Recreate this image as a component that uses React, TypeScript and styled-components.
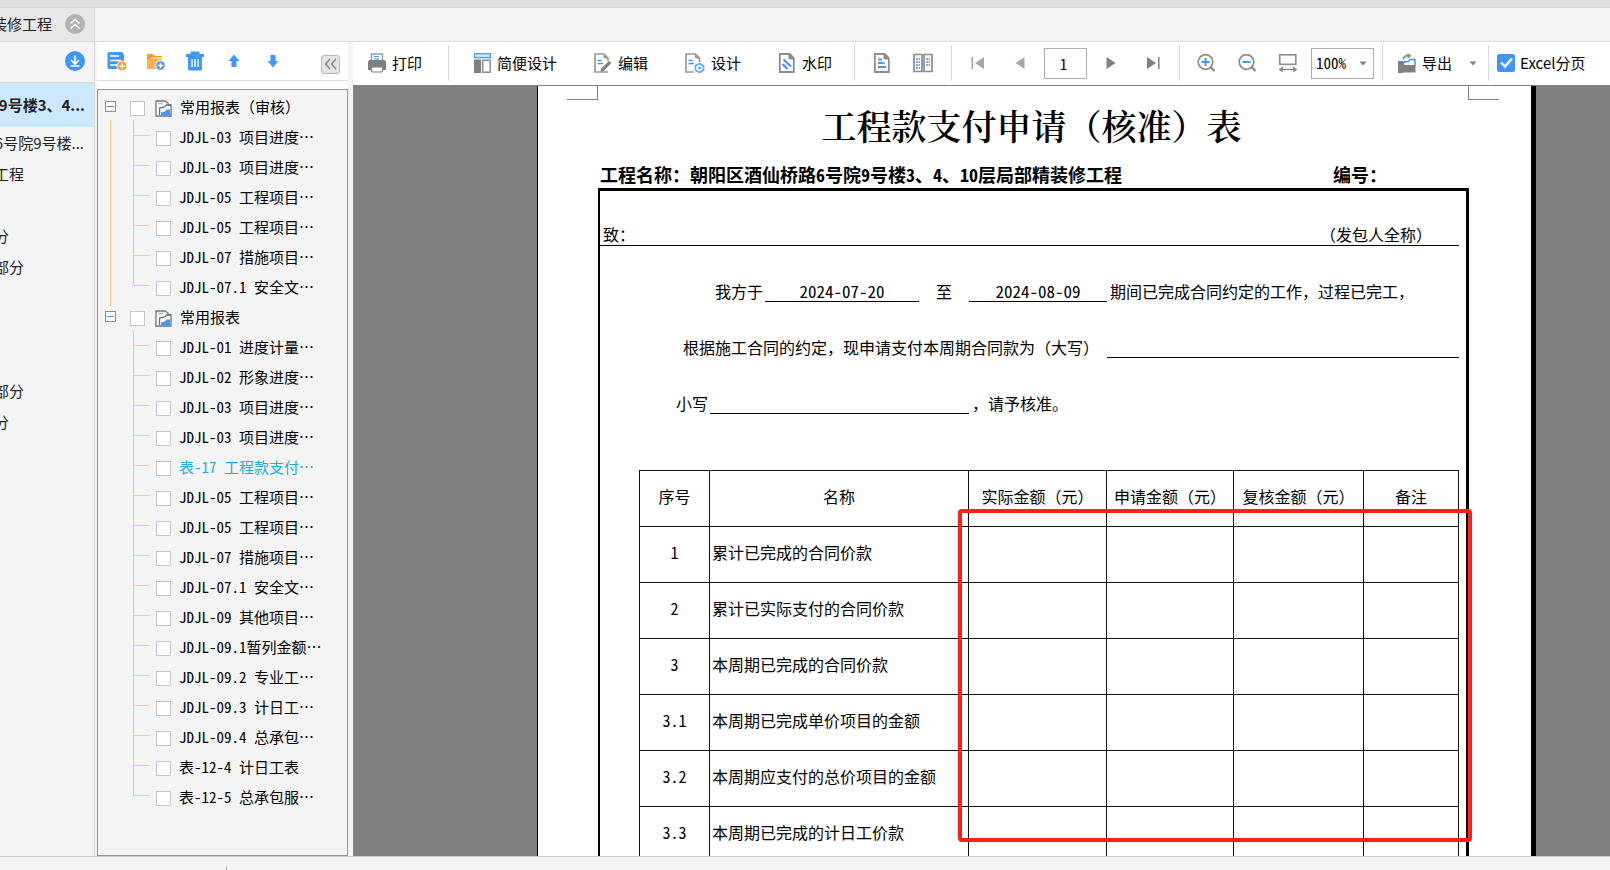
import React from 'react';
import styled, { createGlobalStyle, css } from 'styled-components';

const mono = '"Noto Sans Mono CJK SC", "Noto Sans CJK SC", "Liberation Mono", monospace';
const sans = '"Noto Sans CJK SC", "Noto Sans", sans-serif';

const GlobalStyle = createGlobalStyle`
  *, *::before, *::after { box-sizing: border-box; }
  body { margin: 0; background: #f4f4f4; color: #000; font: 15px/20px ${mono}; }
  button, input, select { font: inherit; color: inherit; margin: 0; }
  ul { list-style: none; margin: 0; padding: 0; }
  svg { display: block; flex: none; }
`;

const Shell = styled.div`
  display: flex;
  flex-direction: column;
  height: 100vh;
  overflow: hidden;
`;

const TitleStrip = styled.div`
  flex: none;
  height: 8px;
  background: #e1e1e1;
  border-bottom: 1px solid #d4d4d4;
`;

const TabStrip = styled.div`
  display: flex;
  flex: none;
  height: 34px;
  background: #f4f4f4;
  border-bottom: 1px solid #dcdcdc;
`;

const ProjectTab = styled.div`
  display: flex;
  align-items: center;
  justify-content: flex-end;
  gap: 13px;
  width: 95px;
  padding: 0 9px 2px 0;
  overflow: hidden;
  white-space: nowrap;
  background: #e7e7e7;
  border-right: 1px solid #d8d8d8;
  color: #222;
  font-family: ${sans};
`;

const IconButton = styled.button`
  display: flex;
  align-items: center;
  justify-content: center;
  flex: none;
  padding: 0;
  border: 0;
  background: none;
`;

const Body = styled.div`
  display: flex;
  flex: 1;
  min-height: 0;
`;

const ProjectNav = styled.nav`
  flex: none;
  width: 95px;
  overflow: hidden;
  background: #f4f4f4;
  border-right: 1px solid #d8d8d8;
  color: #222;
  font-family: ${sans};
  white-space: nowrap;
`;

const NavTop = styled.div`
  display: flex;
  justify-content: flex-end;
  align-items: center;
  height: 41px;
  padding: 0 9px 2px 0;
  border-bottom: 1px solid #dcdcdc;
`;

const NavItem = styled.li<{ $kind?: 'selected' | 'long' }>`
  display: flex;
  align-items: center;
  height: 31px;
  margin-left: -6px;
  ${p => p.$kind && css`
    justify-content: flex-end;
    margin-left: 0;
    padding-right: 10px;
  `}
  ${p => p.$kind === 'selected' && css`
    height: 44px;
    padding-right: 9px;
    background: #cce8ff;
    font-weight: 700;
  `}
`;

const TreePanel = styled.section`
  display: flex;
  flex-direction: column;
  flex: none;
  width: 258px;
  padding: 0 5px 0 2px;
`;

const TreeTools = styled.div`
  display: flex;
  align-items: center;
  flex: none;
  height: 39px;
  padding: 0 8px;
  background: #fff;
  border-bottom: 1px solid #dcdcdc;
`;

const TreeTool = styled(IconButton)`
  width: 24px;
  height: 24px;
  margin-right: 15px;
`;

const CollapseButton = styled(IconButton)`
  width: 19px;
  height: 19px;
  margin: 6px 0 0 auto;
  border: 1px solid #b8b8b8;
  border-radius: 3px;
  background: #e4e4e4;
`;

const TreeBox = styled.div`
  flex: 1;
  margin-top: 8px;
  padding-top: 3px;
  overflow: hidden;
  border: 1px solid #8f949e;
  background: #f4f4f4;
  box-shadow: 0 -8px 0 #fff;
`;

const TreeGroup = styled.li<{ $linked?: boolean }>`
  position: relative;
  ${p => p.$linked && css`
    &::before {
      content: '';
      position: absolute;
      left: 12px;
      top: 27px;
      bottom: -4px;
      width: 1px;
      background: #fcc272;
    }
  `}
`;

const GroupRow = styled.div`
  display: flex;
  align-items: center;
  height: 30px;
  padding-left: 7px;
`;

const Expander = styled(IconButton)`
  width: 11px;
  height: 11px;
  margin: 0 14px 4px 0;
  border: 1px solid #8a8f96;
  background: #fff;
`;

const TreeLabel = styled.label<{ $active?: boolean }>`
  display: flex;
  align-items: center;
  white-space: pre;
  color: ${p => (p.$active ? '#19aee0' : '#000')};
`;

const TreeText = styled.span`
  padding-bottom: 2px;
`;

const TreeCheck = styled.input`
  appearance: none;
  flex: none;
  width: 15px;
  height: 15px;
  border: 1px solid #c6c6c6;
  background: #fff;
`;

const GroupIcon = styled.span`
  margin: 0 8px 0 10px;
`;

const Leaf = styled.li`
  position: relative;
  display: flex;
  align-items: center;
  height: 30px;
  padding-left: 58px;
  &::before {
    content: '';
    position: absolute;
    left: 35px;
    top: -3px;
    width: 16px;
    height: 16px;
    border-left: 1px solid #fcc272;
    border-bottom: 1px solid #fcc98a;
  }
  &:not(:last-child)::after {
    content: '';
    position: absolute;
    left: 35px;
    top: 12px;
    height: 18px;
    width: 1px;
    background: #fcc272;
  }
  ${TreeCheck} { margin-right: 8px; }
`;

const Main = styled.main`
  display: flex;
  flex-direction: column;
  flex: 1;
  min-width: 0;
`;

const Toolbar = styled.div`
  display: flex;
  align-items: center;
  flex: none;
  height: 44px;
  padding-bottom: 1px;
  background: #fff;
  border-bottom: 1px solid #808080;
  white-space: nowrap;
`;

const ToolGroup = styled.div<{ $gap?: number; $left: number; $right?: number }>`
  display: flex;
  align-items: center;
  flex: none;
  height: 36px;
  gap: ${p => p.$gap ?? 0}px;
  padding: 0 ${p => p.$right ?? 0}px 0 ${p => p.$left}px;
  border-right: 1px solid #d9d9d9;
  &:last-child { border-right: 0; }
`;

const ToolButton = styled(IconButton)`
  gap: 6px;
`;

const SquareTool = styled(IconButton)`
  width: 36px;
  height: 30px;
`;

const PageInput = styled.input`
  width: 43px;
  height: 31px;
  padding: 0 4px 0 0;
  border: 1px solid #adadad;
  border-radius: 0;
  background: #fff;
  text-align: center;
`;

const ZoomField = styled.div`
  position: relative;
  svg { position: absolute; right: 7px; top: 13px; pointer-events: none; }
`;

const ZoomSelect = styled.select`
  appearance: none;
  display: block;
  width: 63px;
  height: 31px;
  padding: 0 0 0 4px;
  border: 1px solid #adadad;
  border-radius: 0;
  background: #fff;
`;

const ExcelCheck = styled.label`
  display: grid;
  grid-template-columns: 18px auto;
  align-items: center;
  column-gap: 5px;
  font-family: ${sans};
  input {
    grid-area: 1 / 1;
    appearance: none;
    width: 18px;
    height: 18px;
    border-radius: 2px;
    background: #4096ff;
  }
  svg { grid-area: 1 / 1; pointer-events: none; z-index: 1; }
`;

const Viewport = styled.div`
  flex: 1;
  min-height: 0;
  overflow: hidden;
  padding-left: 184px;
  background: #808080;
`;

const Paper = styled.article`
  position: relative;
  width: 999px;
  min-height: 100%;
  background: #fff;
  border-left: 1px solid #000;
  border-right: 5px solid #000;
`;

const CropMarks = styled.div`
  display: flex;
  justify-content: space-between;
  height: 14px;
  padding: 0 32px 0 29px;
  span { width: 31px; border: 0 solid #808080; border-bottom-width: 1px; }
  span:first-child { border-right-width: 1px; }
  span:last-child { border-left-width: 1px; }
`;

const Sheet = styled.div`
  margin: 3px 62px 0 60px;
  font-size: 16px;
`;

const SheetTitle = styled.h1`
  margin: 0 4px 15px 0;
  font: 600 35px/44px "Noto Serif CJK SC", "Liberation Serif", "Noto Sans CJK SC", serif;
  text-align: center;
  white-space: nowrap;
`;

const SheetMeta = styled.div`
  display: flex;
  justify-content: space-between;
  margin-bottom: 2px;
  padding-left: 2px;
  font-size: 18px;
  font-weight: 700;
  line-height: 24px;
  white-space: nowrap;
  span:last-child { width: 136px; }
`;

const FormBox = styled.div`
  height: 760px;
  border: 3px solid #000;
  border-left-width: 2px;
  padding-right: 7px;
`;

const Line = styled.div<{ $cols: string }>`
  display: grid;
  grid-template-columns: ${p => p.$cols};
  height: 56px;
  white-space: nowrap;
`;

const Addressee = styled.div`
  display: flex;
  justify-content: space-between;
  align-items: flex-end;
  height: 55px;
  padding: 0 27px 0 3px;
  border-bottom: 1px solid #000;
`;

const Words = styled.span<{ $align?: string; $pad?: string }>`
  align-self: end;
  text-align: ${p => p.$align ?? 'left'};
  padding: ${p => p.$pad ?? '0'};
  line-height: 21px;
`;

const Blank = styled.span`
  align-self: end;
  height: 21px;
  border-bottom: 1px solid #000;
  text-align: center;
  font-size: 17px;
  line-height: 20px;
`;

const Amounts = styled.table`
  width: calc(100% - 39px);
  margin: 56px 0 0 39px;
  border-collapse: collapse;
  table-layout: fixed;
  th, td {
    height: 56px;
    padding: 0 0 6px;
    border: 1px solid #111;
    font-weight: 400;
    text-align: center;
    white-space: nowrap;
  }
  td:nth-child(2) { padding-left: 2px; text-align: left; }
`;

const Highlight = styled.div`
  position: absolute;
  left: 420px;
  top: 423px;
  width: 514px;
  height: 333px;
  border: 4px solid #ff2116;
  border-radius: 4px;
`;

const StatusBar = styled.footer`
  display: flex;
  align-items: flex-end;
  flex: none;
  height: 14px;
  padding-left: 226px;
  background: #f4f4f4;
  border-top: 1px solid #cfcfcf;
  span { width: 1px; height: 4px; background: #a8adb5; }
`;

const BLUE = '#4096ff';
const GRAY = '#8c8c8c';

const DocFrame = ({ children }: { children?: React.ReactNode }) => (
  <svg width="18" height="20" viewBox="0 0 18 20" fill="none">
    <path d="M1.800 1h10l4 4v14h-14z" stroke={GRAY} strokeWidth="1.800" />
    <path d="M11 1v5h5z" fill={GRAY} stroke={GRAY} />
    {children}
  </svg>
);

const icons = {
  up2: (
    <svg width="20" height="20" viewBox="0 0 20 20" fill="none">
      <circle cx="10" cy="10" r="10" fill="#b2b2b2" />
      <path d="M5.500 9.500L10 5.500l4.500 4M5.500 14.500l4.500-4 4.500 4" stroke="#fff" strokeWidth="1.600" />
    </svg>
  ),
  down: (
    <svg width="20" height="20" viewBox="0 0 20 20" fill="none">
      <circle cx="10" cy="10" r="10" fill={BLUE} />
      <path d="M10 4.500v8M6 9l4 4 4-4M5.500 15h9" stroke="#fff" strokeWidth="1.600" />
    </svg>
  ),
  addReport: (
    <svg width="20" height="20" viewBox="0 0 20 20" fill="none">
      <path d="M2 1h13l2 3v14H2a1.500 1.500 0 0 1-1.500-1.500v-14A1.500 1.500 0 0 1 2 1z" fill={BLUE} />
      <path d="M3 5h9M3 9.500h11M3 14h7" stroke="#fff" strokeWidth="1.400" />
      <circle cx="15" cy="15" r="5" fill="#ff9a1f" stroke="#fff" />
      <path d="M15 12.200v5.600M12.200 15h5.600" stroke="#fff" strokeWidth="1.500" />
    </svg>
  ),
  addFolder: (
    <svg width="20" height="20" viewBox="0 0 20 20" fill="none">
      <path d="M1 3h6l2 2h7v4H1z" fill="#ff9a1f" />
      <path d="M1 8l5-1h10v11H1z" fill="#ffb04a" />
      <path d="M5 7h11" stroke="#fff" />
      <circle cx="14.500" cy="14.500" r="4.800" fill={BLUE} stroke="#fff" />
      <path d="M14.500 11.700v5.600M11.700 14.500h5.600" stroke="#fff" strokeWidth="1.500" />
    </svg>
  ),
  trash: (
    <svg width="20" height="20" viewBox="0 0 20 20" fill="none">
      <path d="M5.500 0.500h9V3H19v3H1V3h4.500z" fill={BLUE} />
      <path d="M3 6h14v12a1.500 1.500 0 0 1-1.500 1.500h-11A1.500 1.500 0 0 1 3 18z" fill={BLUE} />
      <path d="M7 8v8M10 8v8M13 8v8" stroke="#fff" strokeWidth="1.400" />
    </svg>
  ),
  arrowUp: (
    <svg width="12" height="14" viewBox="0 0 12 14"><path d="M6 0.500l5.500 6.500H8.500v6h-5V7H0.500z" fill={BLUE} /></svg>
  ),
  arrowDown: (
    <svg width="12" height="14" viewBox="0 0 12 14"><path d="M6 13.500L0.500 7h3V1h5v6h3z" fill={BLUE} /></svg>
  ),
  left2: (
    <svg width="13" height="12" viewBox="0 0 13 12" fill="none"><path d="M6 1L1.500 6 6 11M12 1L7.500 6l4.500 5" stroke="#858585" strokeWidth="1.500" /></svg>
  ),
  minus: (
    <svg width="7" height="1" viewBox="0 0 7 1"><path d="M0 0h7v1H0z" fill="#2aa0dc" /></svg>
  ),
  group: (
    <svg width="17" height="17" viewBox="0 0 17 17" fill="none">
      <path d="M1 16V1h9l3 2v2h3v11z" fill="#fff" stroke="#6d7278" strokeWidth="1.300" />
      <path d="M3 3.500h5" stroke="#8cc8ff" strokeWidth="1.600" />
      <path d="M4.500 15V8l5-1 2-2H16" stroke="#6d7278" strokeWidth="1.300" />
      <path d="M6 15.500v-3l4-1 1.500-2H15v6z" fill={BLUE} />
    </svg>
  ),
  print: (
    <svg width="18" height="20" viewBox="0 0 18 20" fill="none">
      <path d="M3.500 8V1h11v7" stroke="#9a9a9a" strokeWidth="1.400" />
      <path d="M6 3.500h5M6 6h5" stroke={BLUE} strokeWidth="1.200" />
      <path d="M2 7h14a2 2 0 0 1 2 2v8H0V9a2 2 0 0 1 2-2z" fill="#808080" />
      <rect x="3.500" y="14" width="11" height="5" rx="1" fill="#fff" stroke="#808080" strokeWidth="1.200" />
    </svg>
  ),
  layout: (
    <svg width="18" height="20" viewBox="0 0 18 20" fill="none">
      <rect x="1.500" y="0.700" width="16" height="4" fill="#cfe5ff" stroke={BLUE} strokeWidth="1.200" />
      <rect x="1" y="6.500" width="7" height="13.500" fill="#808080" />
      <rect x="9.700" y="7.200" width="7.500" height="12" stroke={GRAY} strokeWidth="1.500" />
    </svg>
  ),
  edit: (
    <svg width="18" height="20" viewBox="0 0 18 20" fill="none">
      <path d="M14 8V5l-4-4H1v18h13" stroke="#9a9a9a" strokeWidth="1.700" />
      <path d="M10 1v4h4z" fill="#9a9a9a" stroke="#9a9a9a" />
      <path d="M3.500 7.500h4M3.500 10.500h5.500" stroke={BLUE} strokeWidth="1.500" />
      <path d="M15 8l2.500 2-8 8-3 .5.700-3z" fill="#808080" />
    </svg>
  ),
  design: (
    <svg width="20" height="20" viewBox="0 0 20 20" fill="none">
      <path d="M14.500 9V5l-4-4H1v18h8" stroke="#9a9a9a" strokeWidth="1.700" />
      <path d="M10.500 1v4h4z" fill="#9a9a9a" stroke="#9a9a9a" />
      <path d="M3.500 7.500h4M3.500 10.500h5.500" stroke={BLUE} strokeWidth="1.500" />
      <path d="M14.500 10.500l4 2.200v4.600l-4 2.200-4-2.200v-4.600z" stroke="#5aa8ff" strokeWidth="1.700" />
      <circle cx="14.500" cy="15" r="1.400" fill="#5aa8ff" />
    </svg>
  ),
  watermark: <DocFrame><path d="M5.500 6.500l7.500 7M4.500 11l5 5" stroke={BLUE} strokeWidth="2.200" /></DocFrame>,
  onePage: <DocFrame><path d="M5 6.500h4M5 10h4.500M5 14h8" stroke={BLUE} strokeWidth="1.800" /><path d="M6 10h6" stroke={BLUE} strokeWidth="1.400" /></DocFrame>,
  twoPages: (
    <svg width="20" height="20" viewBox="0 0 20 20" fill="none">
      <path d="M1 1.500h8v17H1zM11 1.500h8v17h-8z" stroke="#8c8c8c" strokeWidth="1.700" />
      <path d="M3 6h4M3 9h4M3 12h4M3 15h4M13 6h4M13 9h4M13 12h4" stroke={BLUE} strokeWidth="1.500" strokeDasharray="2.200 0.500" />
    </svg>
  ),
  first: <svg width="14" height="12" viewBox="0 0 14 12"><path d="M0.500 0h1.500v12H0.500zM13 0v12L4 6z" fill="#a6a6a6" /></svg>,
  prev: <svg width="10" height="12" viewBox="0 0 10 12"><path d="M9.500 0v12L0.500 6z" fill="#a6a6a6" /></svg>,
  next: <svg width="10" height="12" viewBox="0 0 10 12"><path d="M0.500 0v12L9.500 6z" fill="#808080" /></svg>,
  last: <svg width="14" height="12" viewBox="0 0 14 12"><path d="M12 0h1.500v12H12zM1 0v12L10 6z" fill="#808080" /></svg>,
  fit: (
    <svg width="20" height="20" viewBox="0 0 20 20" fill="none">
      <rect x="1.800" y="1.800" width="16" height="9.500" stroke={GRAY} strokeWidth="1.600" />
      <path d="M3 16.500h14" stroke={GRAY} strokeWidth="1.400" />
      <path d="M0.500 16.500L5 13.500v6zM19.500 16.500L15 13.500v6z" fill={GRAY} />
    </svg>
  ),
  caret: <svg width="8" height="5" viewBox="0 0 8 5"><path d="M0.500 0.500h7L4 4.500z" fill="#808080" /></svg>,
  exportOut: (
    <svg width="18" height="20" viewBox="0 0 18 20" fill="none">
      <path d="M5.500 6.500c0-3 2-4 5-4" stroke={GRAY} strokeWidth="1.800" />
      <path d="M9.500 0l4 2.700-4 3z" fill={GRAY} />
      <path d="M0 8h5v12H0z" fill="#808080" />
      <path d="M5.500 13V9l5-.5 1.500-2h5V13" fill="#fff" stroke={BLUE} strokeWidth="1.500" />
      <path d="M0 12h17.500v7.500H0z" fill="#808080" />
    </svg>
  ),
  tick: <svg width="18" height="18" viewBox="0 0 18 18" fill="none"><path d="M4 8.500l4 4 7-8" stroke="#fff" strokeWidth="2.300" /></svg>,
};

const Magnifier = ({ plus }: { plus?: boolean }) => (
  <svg width="20" height="20" viewBox="0 0 20 20" fill="none">
    <circle cx="9.500" cy="9" r="7.300" stroke={GRAY} strokeWidth="1.700" />
    <path d="M14.500 14l4 4" stroke={GRAY} strokeWidth="2.400" />
    <path d={plus ? 'M9.500 5v8M5.500 9h8' : 'M5.500 9h8'} stroke={BLUE} strokeWidth="2" />
  </svg>
);

const navRows = ['工程', '', '分', '部分', '', '', '', '部分', '分'];

const groups = [
  {
    name: '常用报表（审核）',
    items: ['JDJL-03 项目进度…', 'JDJL-03 项目进度…', 'JDJL-05 工程项目…', 'JDJL-05 工程项目…', 'JDJL-07 措施项目…', 'JDJL-07.1 安全文…'],
  },
  {
    name: '常用报表',
    items: [
      'JDJL-01 进度计量…', 'JDJL-02 形象进度…', 'JDJL-03 项目进度…', 'JDJL-03 项目进度…', '表-17 工程款支付…',
      'JDJL-05 工程项目…', 'JDJL-05 工程项目…', 'JDJL-07 措施项目…', 'JDJL-07.1 安全文…', 'JDJL-09 其他项目…',
      'JDJL-09.1暂列金额…', 'JDJL-09.2 专业工…', 'JDJL-09.3 计日工…', 'JDJL-09.4 总承包…', '表-12-4 计日工表', '表-12-5 总承包服…',
    ],
  },
];

const tools: [React.ReactNode, string][] = [
  [icons.layout, '简便设计'],
  [icons.edit, '编辑'],
  [icons.design, '设计'],
  [icons.watermark, '水印'],
];

const columns: [string, number][] = [
  ['序号', 70], ['名称', 259], ['实际金额（元）', 138], ['申请金额（元）', 127], ['复核金额（元）', 130], ['备注', 95],
];

const rows = [
  ['1', '累计已完成的合同价款'],
  ['2', '累计已实际支付的合同价款'],
  ['3', '本周期已完成的合同价款'],
  ['3.1', '本周期已完成单价项目的金额'],
  ['3.2', '本周期应支付的总价项目的金额'],
  ['3.3', '本周期已完成的计日工价款'],
];

export default function App() {
  return (
    <Shell>
      <GlobalStyle />
      <TitleStrip />
      <TabStrip>
        <ProjectTab>
          装修工程
          <IconButton aria-label="收起">{icons.up2}</IconButton>
        </ProjectTab>
      </TabStrip>
      <Body>
        <ProjectNav>
          <NavTop><IconButton aria-label="下载">{icons.down}</IconButton></NavTop>
          <ul>
            <NavItem $kind="selected">9号楼3、4...</NavItem>
            <NavItem $kind="long">6号院9号楼...</NavItem>
            {navRows.map((text, i) => <NavItem key={i}>{text}</NavItem>)}
          </ul>
        </ProjectNav>

        <TreePanel>
          <TreeTools>
            <TreeTool aria-label="新建报表">{icons.addReport}</TreeTool>
            <TreeTool aria-label="新建文件夹">{icons.addFolder}</TreeTool>
            <TreeTool aria-label="删除">{icons.trash}</TreeTool>
            <TreeTool aria-label="上移">{icons.arrowUp}</TreeTool>
            <TreeTool aria-label="下移">{icons.arrowDown}</TreeTool>
            <CollapseButton aria-label="折叠面板">{icons.left2}</CollapseButton>
          </TreeTools>
          <TreeBox>
            <ul>
              {groups.map((group, g) => (
                <TreeGroup key={group.name} $linked={g === 0}>
                  <GroupRow>
                    <Expander aria-label="折叠">{icons.minus}</Expander>
                    <TreeLabel>
                      <TreeCheck type="checkbox" />
                      <GroupIcon>{icons.group}</GroupIcon>
                      <TreeText>{group.name}</TreeText>
                    </TreeLabel>
                  </GroupRow>
                  <ul>
                    {group.items.map((item, i) => (
                      <Leaf key={i}>
                        <TreeLabel $active={item.startsWith('表-17')}>
                          <TreeCheck type="checkbox" />
                          <TreeText>{item}</TreeText>
                        </TreeLabel>
                      </Leaf>
                    ))}
                  </ul>
                </TreeGroup>
              ))}
            </ul>
          </TreeBox>
        </TreePanel>

        <Main>
          <Toolbar>
            <ToolGroup $left={15} $right={26}>
              <ToolButton>{icons.print}打印</ToolButton>
            </ToolGroup>
            <ToolGroup $left={24} $right={22} $gap={37}>
              {tools.map(([icon, text]) => <ToolButton key={text}>{icon}{text}</ToolButton>)}
            </ToolGroup>
            <ToolGroup $left={18} $right={18} $gap={22}>
              <IconButton aria-label="单页">{icons.onePage}</IconButton>
              <IconButton aria-label="双页">{icons.twoPages}</IconButton>
            </ToolGroup>
            <ToolGroup $left={8} $right={8} $gap={6}>
              <SquareTool aria-label="首页">{icons.first}</SquareTool>
              <SquareTool aria-label="上一页">{icons.prev}</SquareTool>
              <PageInput aria-label="页码" defaultValue="1" />
              <SquareTool aria-label="下一页">{icons.next}</SquareTool>
              <SquareTool aria-label="末页">{icons.last}</SquareTool>
            </ToolGroup>
            <ToolGroup $left={8} $right={8} $gap={5}>
              <SquareTool aria-label="放大"><Magnifier plus /></SquareTool>
              <SquareTool aria-label="缩小"><Magnifier /></SquareTool>
              <SquareTool aria-label="适合宽度">{icons.fit}</SquareTool>
              <ZoomField>
                <ZoomSelect aria-label="缩放比例" defaultValue="100%">
                  <option>100%</option>
                </ZoomSelect>
                {icons.caret}
              </ZoomField>
            </ToolGroup>
            <ToolGroup $left={15} $right={11} $gap={17}>
              <ToolButton>{icons.exportOut}导出</ToolButton>
              <IconButton aria-label="导出选项">{icons.caret}</IconButton>
            </ToolGroup>
            <ToolGroup $left={8}>
              <ExcelCheck>
                <input type="checkbox" defaultChecked />
                {icons.tick}
                Excel分页
              </ExcelCheck>
            </ToolGroup>
          </Toolbar>

          <Viewport>
            <Paper>
              <CropMarks><span /><span /></CropMarks>
              <Sheet>
                <SheetTitle>工程款支付申请（核准）表</SheetTitle>
                <SheetMeta>
                  <span>工程名称：朝阳区酒仙桥路6号院9号楼3、4、10层局部精装修工程</span>
                  <span>编号：</span>
                </SheetMeta>
                <FormBox>
                  <Addressee>
                    <Words>致：</Words>
                    <Words>（发包人全称）</Words>
                  </Addressee>
                  <Line $cols="165px 154px 50px 138px 1fr">
                    <Words $align="right" $pad="0 2px 0 0">我方于</Words>
                    <Blank>2024-07-20</Blank>
                    <Words $align="center">至</Words>
                    <Blank>2024-08-09</Blank>
                    <Words $pad="0 0 0 3px">期间已完成合同约定的工作，过程已完工，</Words>
                  </Line>
                  <Line $cols="507px 1fr">
                    <Words $pad="0 0 0 83px">根据施工合同的约定，现申请支付本周期合同款为（大写）</Words>
                    <Blank />
                  </Line>
                  <Line $cols="110px 259px 1fr">
                    <Words $align="right" $pad="0 2px 0 0">小写</Words>
                    <Blank />
                    <Words $pad="0 0 0 3px">，请予核准。</Words>
                  </Line>
                  <Amounts>
                    <colgroup>
                      {columns.map(([name, width]) => <col key={name} width={width} />)}
                    </colgroup>
                    <thead>
                      <tr>{columns.map(([name]) => <th key={name} scope="col">{name}</th>)}</tr>
                    </thead>
                    <tbody>
                      {rows.map(([no, name]) => (
                        <tr key={no}><td>{no}</td><td>{name}</td><td /><td /><td /><td /></tr>
                      ))}
                    </tbody>
                  </Amounts>
                </FormBox>
              </Sheet>
              <Highlight />
            </Paper>
          </Viewport>
        </Main>
      </Body>
      <StatusBar><span /></StatusBar>
    </Shell>
  );
}
